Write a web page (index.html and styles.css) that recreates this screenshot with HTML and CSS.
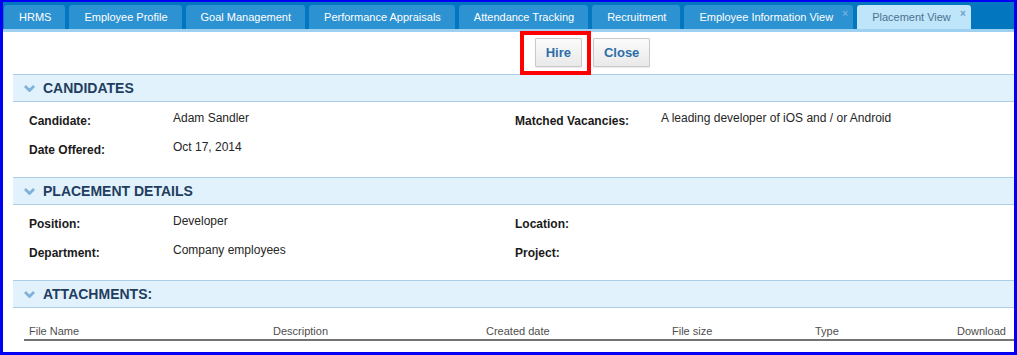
FILE: index.html
```html
<!DOCTYPE html>
<html>
<head>
<meta charset="utf-8">
<link rel="stylesheet" href="styles.css">
</head>
<body>
<div class="frame">
  <div class="tabbar">
    <div class="tab">HRMS</div>
    <div class="tab">Employee Profile</div>
    <div class="tab">Goal Management</div>
    <div class="tab">Performance Appraisals</div>
    <div class="tab">Attendance Tracking</div>
    <div class="tab">Recruitment</div>
    <div class="tab closable">Employee Information View<span class="x">&#215;</span></div>
    <div class="tab closable active">Placement View<span class="x">&#215;</span></div>
  </div>
  <div class="content">
    <div class="toolbar">
      <span class="highlight"><button class="btn">Hire</button></span>
      <button class="btn">Close</button>
    </div>

    <section class="sec">
      <div class="sec-head">
        <svg class="chev" width="11" height="7" viewBox="0 0 11 7"><polyline points="1,1 5.5,5.5 10,1" fill="none" stroke="#7fb1d9" stroke-width="2.8"/></svg>
        <span>CANDIDATES</span>
      </div>
      <div class="fields">
        <div class="field"><span class="lbl">Candidate:</span><span class="val">Adam Sandler</span></div>
        <div class="field right"><span class="lbl">Matched Vacancies:</span><span class="val">A leading developer of iOS and / or Android</span></div>
        <div class="field"><span class="lbl">Date Offered:</span><span class="val">Oct 17, 2014</span></div>
        <div class="field right"></div>
      </div>
    </section>

    <section class="sec">
      <div class="sec-head">
        <svg class="chev" width="11" height="7" viewBox="0 0 11 7"><polyline points="1,1 5.5,5.5 10,1" fill="none" stroke="#7fb1d9" stroke-width="2.8"/></svg>
        <span>PLACEMENT DETAILS</span>
      </div>
      <div class="fields">
        <div class="field"><span class="lbl">Position:</span><span class="val">Developer</span></div>
        <div class="field right"><span class="lbl">Location:</span><span class="val"></span></div>
        <div class="field"><span class="lbl">Department:</span><span class="val">Company employees</span></div>
        <div class="field right"><span class="lbl">Project:</span><span class="val"></span></div>
      </div>
    </section>

    <section class="sec">
      <div class="sec-head">
        <svg class="chev" width="11" height="7" viewBox="0 0 11 7"><polyline points="1,1 5.5,5.5 10,1" fill="none" stroke="#7fb1d9" stroke-width="2.8"/></svg>
        <span>ATTACHMENTS:</span>
      </div>
      <div class="table">
        <div class="thead">
          <div class="th">File Name</div>
          <div class="th">Description</div>
          <div class="th">Created date</div>
          <div class="th">File size</div>
          <div class="th">Type</div>
          <div class="th">Download</div>
        </div>
      </div>
    </section>
  </div>
</div>
</body>
</html>
```

FILE: styles.css
```css
* { box-sizing: border-box; }

html, body {
  margin: 0;
  padding: 0;
  background: #ffffff;
}

body {
  font-family: "Liberation Sans", Arial, sans-serif;
}

.frame {
  width: 1017px;
  height: 355px;
  border-style: solid;
  border-color: #0000f5;
  border-width: 2px 3px 3px 3px;
  overflow: hidden;
  background: #ffffff;
}

/* ---------- tab bar ---------- */
.tabbar {
  display: flex;
  align-items: flex-end;
  gap: 4px;
  height: 30px;
  padding-left: 1px;
  background: #0277bf;
  border-bottom: 3px solid #9ed1f1;
}

.tab {
  position: relative;
  height: 24px;
  line-height: 24px;
  padding: 0 14px 0 15px;
  font-size: 11px;
  color: #ffffff;
  background: #2c92d2;
  border-radius: 3px 3px 0 0;
  white-space: nowrap;
}

.tab.closable { padding-right: 20px; }

.tab.active {
  background: #bee5f9;
  color: #4b7393;
}

.tab .x {
  position: absolute;
  top: 4px;
  right: 5px;
  font-size: 10px;
  line-height: 10px;
  font-weight: bold;
  color: #6eb0e0;
}

.tab.active .x { color: #6b9fc6; }

/* ---------- content ---------- */
.content {
  padding-left: 10px;
}

.toolbar {
  display: flex;
  justify-content: center;
  gap: 11px;
  padding: 6px 0 6px 158px;
  height: 42px;
}

.highlight {
  position: relative;
  display: flex;
}

.highlight::after {
  content: "";
  position: absolute;
  left: -15px;
  right: -9px;
  top: -7px;
  bottom: -7px;
  border: 4px solid #ff0000;
  pointer-events: none;
}

.btn {
  height: 29px;
  padding: 0 10px;
  font-family: "Liberation Sans", Arial, sans-serif;
  font-size: 13px;
  font-weight: bold;
  color: #2d6ea8;
  background: linear-gradient(#fbfbfb, #e9e9e9);
  border: 1px solid #c9c9c9;
  border-radius: 1px;
  box-shadow: 0 1px 1px rgba(0,0,0,0.08);
}

/* ---------- sections ---------- */
.sec-head {
  display: flex;
  align-items: center;
  gap: 8px;
  height: 28px;
  padding-left: 11px;
  background: #e2f2fc;
  border-top: 1px solid #abcfe8;
  border-bottom: 1px solid #abcfe8;
  font-size: 14px;
  font-weight: bold;
  color: #1f3d5f;
}

.chev { display: block; margin-top: 1px; }

.fields {
  display: grid;
  grid-template-columns: 486px 1fr;
  row-gap: 9px;
  padding: 9px 0 17px 16px;
}

.field {
  display: flex;
  align-items: flex-start;
  height: 20px;
}

.lbl {
  width: 144px;
  flex: none;
  font-size: 12px;
  font-weight: bold;
  line-height: 20px;
  color: #1a1a1a;
}

.field.right .lbl { width: 146px; }

.val {
  font-size: 12px;
  line-height: 14px;
  color: #262626;
}

/* ---------- table ---------- */
.table {
  padding: 15px 0 0 11px;
}

.thead {
  display: grid;
  grid-template-columns: 244px 213px 186px 143px 142px 1fr;
  border-bottom: 2px solid #747474;
}

.th {
  padding-left: 5px;
  font-size: 11px;
  line-height: 16px;
  color: #4e4e4e;
}

.th:last-child {
  text-align: right;
  padding-right: 9px;
}
```
